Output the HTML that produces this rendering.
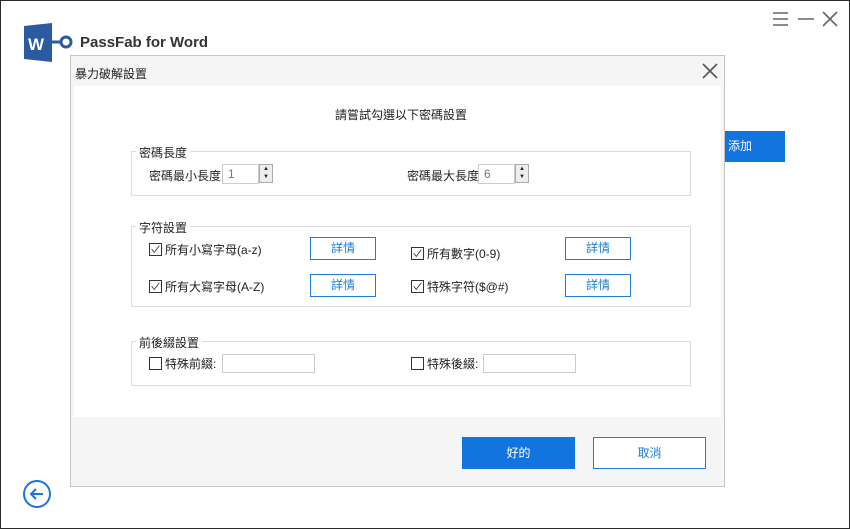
<!DOCTYPE html>
<html><head><meta charset="utf-8"><style>
*{margin:0;padding:0;box-sizing:border-box}
body{width:850px;height:529px;position:relative;background:#fff;font-family:"Liberation Sans","Noto Sans CJK TC",sans-serif;font-size:12px;color:#222;overflow:hidden}
.abs{position:absolute}
.win{left:0;top:0;width:850px;height:529px;border:1px solid #2a2a2a}
.dlg{left:70px;top:55px;width:655px;height:432px;border:1px solid #c4c4c4;background:#f5f5f5}
.body{left:3px;top:30px;width:647px;height:331px;background:#fff}
.grp{border:1px solid #dcdcdc;left:131px;width:560px}
.lg{background:#fff;padding:0 3px;font-size:12px}
.row{display:flex;align-items:center;height:16px;gap:3px}
.cb{width:13px;height:13px;border:1px solid #333;background:#fff;display:block}
.btn{border:1px solid #1e7ee0;color:#1a7fd6;text-align:center;background:#fff;font-size:12px}
.inp{border:1px solid #ccc;background:#fff;color:#777;font-size:12px;padding-left:5px;line-height:18px}
.spin{width:14px;height:19px;border:1px solid #aaa;background:#eee;font-size:6px;text-align:center;line-height:8px}
</style></head><body>
<div class="abs win"></div>
<svg class="abs" style="left:23px;top:23px" width="52" height="40"><polygon points="1,3 29,0 29,39 1,36" fill="#2b5aa0"/><text x="5" y="27" fill="#fff" font-family="Liberation Sans" font-weight="bold" font-size="17">W</text><line x1="29" y1="19" x2="37" y2="19" stroke="#2b5aa0" stroke-width="3"/><circle cx="43" cy="19" r="5" fill="none" stroke="#2b5aa0" stroke-width="3"/></svg>
<div class="abs" style="left:80px;top:34px;font-size:15px;font-weight:bold;color:#333">PassFab for Word</div>
<svg class="abs" style="left:770px;top:10px" width="70" height="18" stroke="#666" stroke-width="1.6" fill="none"><path d="M3 3h15M3 9h15M3 15h15M28 9h16M53 2l14 14M67 2l-14 14"/></svg>
<div class="abs" style="left:724px;top:131px;width:61px;height:31px;background:#1174df;color:#fff;line-height:31px;padding-left:4px">添加</div>
<svg class="abs" style="left:22px;top:479px" width="30" height="30" fill="none" stroke="#1a74e0" stroke-width="2"><circle cx="15" cy="15" r="13"/><path d="M21 15H9M14 10l-5 5 5 5"/></svg>
<div class="abs dlg">
<div class="abs" style="left:4px;top:9px;font-size:12px">暴力破解設置</div>
<svg class="abs" style="left:631px;top:7px" width="16" height="16" stroke="#555" stroke-width="1.6"><path d="M1 1l14 14M15 1L1 15"/></svg>
<div class="abs body"></div>
<div class="abs" style="left:391px;top:381px;width:113px;height:32px;background:#1174df;color:#fff;text-align:center;line-height:32px">好的</div>
<div class="abs btn" style="left:522px;top:381px;width:113px;height:32px;line-height:30px">取消</div>
</div>
<div class="abs" style="left:335px;top:106px;font-size:12px">請嘗試勾選以下密碼設置</div>
<div class="abs grp" style="top:151px;height:45px"></div>
<div class="abs lg" style="left:136px;top:144px">密碼長度</div>
<div class="abs" style="left:149px;top:167px">密碼最小長度</div>
<div class="abs inp" style="left:222px;top:164px;width:37px;height:20px">1</div>
<div class="abs spin" style="left:259px;top:164px">▲<br>▼</div>
<div class="abs" style="left:407px;top:167px">密碼最大長度</div>
<div class="abs inp" style="left:478px;top:164px;width:37px;height:20px">6</div>
<div class="abs spin" style="left:515px;top:164px">▲<br>▼</div>
<div class="abs grp" style="top:226px;height:81px"></div>
<div class="abs lg" style="left:136px;top:219px">字符設置</div>
<div class="abs row" style="left:149px;top:241px"><svg class="cb" viewBox="0 0 13 13"><path d="M2 6l3 4 6-8" stroke="#333" fill="none"/></svg>所有小寫字母(a-z)</div>
<div class="abs btn" style="left:310px;top:237px;width:66px;height:23px;line-height:21px">詳情</div>
<div class="abs row" style="left:411px;top:245px"><svg class="cb" viewBox="0 0 13 13"><path d="M2 6l3 4 6-8" stroke="#333" fill="none"/></svg>所有數字(0-9)</div>
<div class="abs btn" style="left:565px;top:237px;width:66px;height:23px;line-height:21px">詳情</div>
<div class="abs row" style="left:149px;top:278px"><svg class="cb" viewBox="0 0 13 13"><path d="M2 6l3 4 6-8" stroke="#333" fill="none"/></svg>所有大寫字母(A-Z)</div>
<div class="abs btn" style="left:310px;top:274px;width:66px;height:23px;line-height:21px">詳情</div>
<div class="abs row" style="left:411px;top:278px"><svg class="cb" viewBox="0 0 13 13"><path d="M2 6l3 4 6-8" stroke="#333" fill="none"/></svg>特殊字符($@#)</div>
<div class="abs btn" style="left:565px;top:274px;width:66px;height:23px;line-height:21px">詳情</div>
<div class="abs grp" style="top:341px;height:45px"></div>
<div class="abs lg" style="left:136px;top:334px">前後綴設置</div>
<div class="abs row" style="left:149px;top:355px"><span class="cb"></span>特殊前綴:</div>
<div class="abs inp" style="left:222px;top:354px;width:93px;height:19px"></div>
<div class="abs row" style="left:411px;top:355px"><span class="cb"></span>特殊後綴:</div>
<div class="abs inp" style="left:483px;top:354px;width:93px;height:19px"></div>
</body></html>
